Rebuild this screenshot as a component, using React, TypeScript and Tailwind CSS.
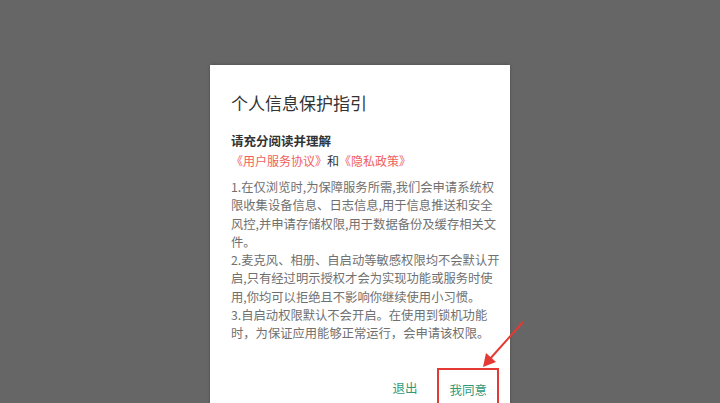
import React from 'react';

const font = { fontFamily: '"Noto Sans CJK SC", "Noto Sans", sans-serif' };

const bodyLines = [
  '1.在仅浏览时,为保障服务所需,我们会申请系统权',
  '限收集设备信息、日志信息,用于信息推送和安全',
  '风控,并申请存储权限,用于数据备份及缓存相关文',
  '件。',
  '2.麦克风、相册、自启动等敏感权限均不会默认开',
  '启,只有经过明示授权才会为实现功能或服务时使',
  '用,你均可以拒绝且不影响你继续使用小习惯。',
  '3.自启动权限默认不会开启。在使用到锁机功能',
  '时，为保证应用能够正常运行，会申请该权限。',
];

export default function App() {
  return (
    <div className="relative flex h-[403px] w-[720px] justify-center overflow-hidden bg-[#666666]" style={font}>
      <div className="mt-[65px] h-[360px] w-[300px] bg-white px-[21px] pt-[26px] shadow-[0_0_3px_rgba(0,0,0,0.25)]">
        <h1 className="text-[17px] leading-[24px] text-[#333333]">个人信息保护指引</h1>
        <p className="mt-[16px] text-[12.5px] font-bold leading-[20px] text-[#333333]">请充分阅读并理解</p>
        <p className="text-[12px] leading-[20px] text-[#333333]">
          <span className="text-[#f06060]">《用户服务协议》</span>和<span className="text-[#f06060]">《隐私政策》</span>
        </p>
        <p className="mt-[7px] text-[12.3px] leading-[18.3px] text-[#707070]">
          {bodyLines.map((l, i) => (
            <span key={i} className="block whitespace-nowrap">{l}</span>
          ))}
        </p>
        <div className="mt-[33px] flex justify-end gap-[32px] pr-[2px]">
          <button className="text-[12.5px] leading-[20px] text-[#2f9a78]">退出</button>
          <div className="relative">
            <button className="text-[12.5px] leading-[20px] text-[#2f9a78]">我同意</button>
            <div className="absolute left-[-12px] top-[-8px] h-[40px] w-[62px] border-2 border-[#e53935]" />
          </div>
        </div>
      </div>
      <svg className="absolute left-0 top-0" width="720" height="403" viewBox="0 0 720 403">
        <line x1="523" y1="322" x2="489" y2="360" stroke="#e53935" strokeWidth="2" />
        <polygon points="483,367 486,353 496,362" fill="#e53935" />
      </svg>
    </div>
  );
}
